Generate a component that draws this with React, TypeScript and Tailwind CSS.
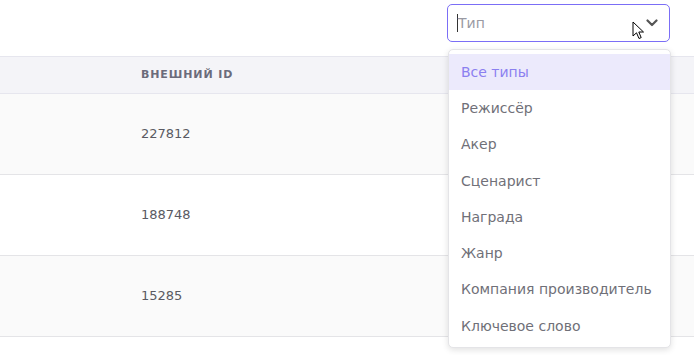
import React from 'react';

const rows = [
  { id: '227812', striped: true },
  { id: '188748', striped: false },
  { id: '15285', striped: true },
];

const types = [
  'Все типы',
  'Режиссёр',
  'Акер',
  'Сценарист',
  'Награда',
  'Жанр',
  'Компания производитель',
  'Ключевое слово',
];

function Pointer() {
  return (
    <svg width="14" height="20" viewBox="0 0 14 20" className="absolute left-[632px] top-[21px]">
      <path d="M1 1 L1 15 L4.5 11.8 L7 17.5 L9.2 16.6 L6.8 11 L11.5 11 Z" fill="#fff" stroke="#000" strokeWidth="1" strokeLinejoin="round" />
    </svg>
  );
}

export default function App() {
  return (
    <div className="relative w-[694px] h-[355px] bg-white overflow-hidden text-[#3f3f46]" style={{ fontFamily: '"DejaVu Sans", sans-serif' }}>
      <div className="h-[56px] flex justify-end items-start pt-[4px] pr-[24px]">
        <div className="w-[223px] h-[38px] border border-[#7b6ef6] rounded-[5px] flex items-center pl-[9px] pr-[11px]">
          <span className="w-px h-[18px] bg-[#333]" />
          <span className="flex-1 text-[14px] text-[#9a9aa3]">Тип</span>
          <svg width="12" height="8" viewBox="0 0 12 8">
            <path d="M1.5 1.5 L6 6 L10.5 1.5" fill="none" stroke="#555" strokeWidth="2.2" strokeLinecap="round" strokeLinejoin="round" />
          </svg>
        </div>
      </div>

      <div className="h-[38px] bg-[#f4f4f8] border-y border-[#e6e6ee] flex items-center pl-[141px]">
        <span className="text-[11px] font-semibold tracking-[0.08em] text-[#6b6b7b]">ВНЕШНИЙ ID</span>
      </div>

      {rows.map((r) => (
        <div
          key={r.id}
          className={`h-[81px] border-b border-[#e4e4e7] flex items-center pl-[141px] ${r.striped ? 'bg-[#fafafa]' : 'bg-white'}`}
        >
          <span className="text-[13px] text-[#5a5a62]">{r.id}</span>
        </div>
      ))}

      <div className="absolute left-[448px] top-[49px] w-[223px] h-[299px] bg-white border border-[#e4e4e7] rounded-[5px] shadow-[0_2px_6px_rgba(0,0,0,0.12)] pt-[4px]">
        {types.map((t, i) => (
          <div
            key={t}
            className={`h-[36.3px] flex items-center pl-[12px] text-[14px] ${i === 0 ? 'bg-[#eceafc] text-[#8b80f0]' : 'text-[#707078]'}`}
          >
            {t}
          </div>
        ))}
      </div>

      <Pointer />
    </div>
  );
}
